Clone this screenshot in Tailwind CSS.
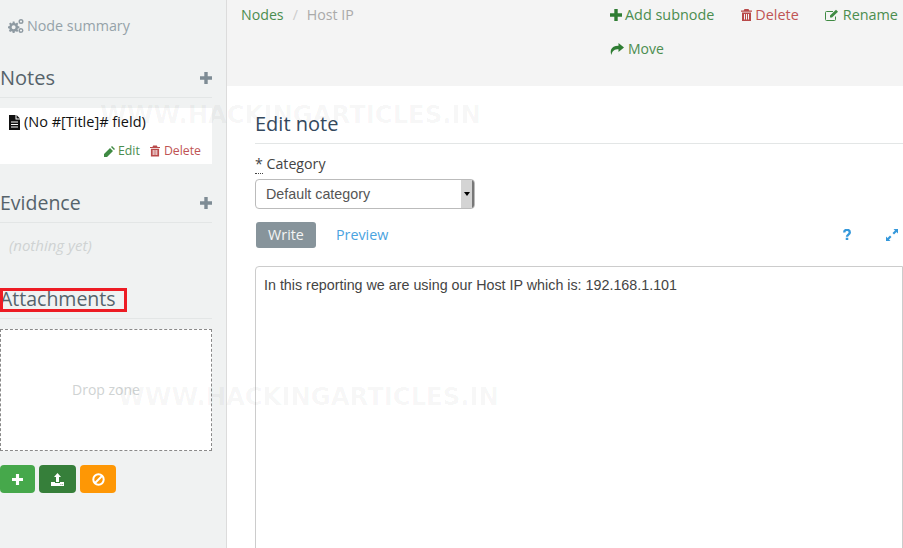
<!DOCTYPE html>
<html lang="en">
<head>
    <meta charset="UTF-8">
    <title>Edit note</title>
    <script src="https://cdn.jsdelivr.net/npm/@tailwindcss/browser@4"></script>
</head>
<body class="relative w-[903px] h-[548px] overflow-hidden bg-white font-['Open_Sans',sans-serif] text-[14px] flex">
    <!-- Sidebar -->
    <aside class="w-[227px] h-full shrink-0 bg-[#f0f2f2] border-r border-[#dcdcdc] flex flex-col">
        <div class="h-[50px] pl-[8px] pt-[1px] flex items-center gap-[3px] text-[14.3px] text-[#95a2a9]">
            <svg class="w-[16px] h-[14px]" viewBox="0 0 16 14" fill="#8e9aa2">
                <path fill-rule="evenodd" d="M4.700 2.500h1.800l.3 1.500 1 .4 1.300-.8 1.200 1.200-.8 1.300.4 1 1.500.3v1.800l-1.500.3-.4 1 .8 1.300-1.200 1.200-1.300-.8-1 .4-.3 1.500H4.700l-.3-1.500-1-.4-1.300.8L.9 11.800l.8-1.300-.4-1L0 9.200V7.400l1.500-.3.4-1-.8-1.300 1.200-1.200 1.300.8 1-.4zM5.600 6.300a2 2 0 1 0 0 4 2 2 0 0 0 0-4z"/>
                <path fill-rule="evenodd" d="M13 0a2.500 2.500 0 1 0 0 5 2.500 2.500 0 0 0 0-5zm0 1.400a1.100 1.100 0 1 1 0 2.200 1.100 1.100 0 0 1 0-2.200zM13 9a2.500 2.500 0 1 0 0 5 2.500 2.500 0 0 0 0-5zm0 1.400a1.100 1.100 0 1 1 0 2.200 1.100 1.100 0 0 1 0-2.200z"/>
            </svg>
            <span>Node summary</span>
        </div>

        <div class="w-[212px] h-[48px] flex items-end justify-between border-b border-[#e3e6e6] pb-[5px]">
            <h2 class="text-[20px] leading-[28px] text-[#56636b]">Notes</h2>
            <svg class="w-[12px] h-[12px] mb-[8px]" viewBox="0 0 12 12" fill="#7e8c95"><path d="M4.300 0h3.400v4.300H12v3.400H7.700V12H4.300V7.700H0V4.300h4.300z"/></svg>
        </div>
        <div class="mt-[10px] w-[212px] h-[56px] bg-white">
            <div class="pl-[8px] pt-[4px] flex items-center gap-[3px] text-[14.5px] leading-[20px] text-[#111]">
                <svg class="w-[13px] h-[15px]" viewBox="0 0 13 15" fill="#111"><path fill-rule="evenodd" d="M1 0h6.500v4.500H12V15H1zM8.500 0 12 3.500H8.500zM3 6.500v1h7v-1zM3 9v1h7V9zM3 11.500v1h7v-1z"/></svg>
                <span>(No #[Title]# field)</span>
            </div>
            <div class="mt-[11px] pr-[11px] flex justify-end gap-[10px] text-[12.300px] leading-[16px]">
                <span class="flex items-center gap-[3px] text-[#4b8d4f]">
                    <svg class="w-[11px] h-[11px]" viewBox="0 0 11 11" fill="#3f8a43"><path d="M0 11V8l6-6 3 3-6 6zM7 1l1-1 3 3-1 1z"/></svg>
                    Edit
                </span>
                <span class="flex items-center gap-[4px] text-[#c05454]">
                    <svg class="w-[10px] h-[12px]" viewBox="0 0 11 12" fill="#b94a4a"><path fill-rule="evenodd" d="M3.500 0h4l.8 1.500H11v1.200H0V1.500h2.700zM1 3.500h9V12H1zM3 5v5.500h1V5zM5 5v5.500h1V5zM7 5v5.500h1V5z"/></svg>
                    Delete
                </span>
            </div>
        </div>

        <div class="mt-[11px] w-[212px] h-[48px] flex items-end justify-between border-b border-[#e3e6e6] pb-[5px]">
            <h2 class="text-[19.500px] leading-[28px] text-[#56636b]">Evidence</h2>
            <svg class="w-[12px] h-[12px] mb-[8px]" viewBox="0 0 12 12" fill="#7e8c95"><path d="M4.300 0h3.400v4.300H12v3.400H7.700V12H4.300V7.700H0V4.300h4.300z"/></svg>
        </div>
        <p class="pl-[9px] mt-[12px] text-[15px] leading-[20px] italic text-[#cfd3d3]">(nothing yet)</p>

        <div class="mt-[27px] w-[212px] h-[37px] flex items-end border-b border-[#e3e6e6] pb-[5px]">
            <h2 class="text-[19.500px] leading-[28px] text-[#56636b] whitespace-nowrap">Attachments</h2>
        </div>
        <div class="mt-[10px] w-[212px] h-[122px] pb-[2px] bg-white border border-dashed border-[#8a8a8a] flex items-center justify-center text-[14px] text-[#cfd3d3]">Drop zone</div>
        <div class="mt-[14px] flex gap-[4px]">
            <button class="w-[35px] h-[28px] rounded-[4px] bg-[#46a84b] flex items-center justify-center">
                <svg class="w-[11px] h-[11px]" viewBox="0 0 12 12" fill="#fff"><path d="M4.300 0h3.400v4.300H12v3.400H7.700V12H4.300V7.700H0V4.300h4.300z"/></svg>
            </button>
            <button class="w-[37px] h-[28px] rounded-[4px] bg-[#367f3a] flex items-center justify-center">
                <svg class="w-[13px] h-[13px]" viewBox="0 0 13 13" fill="#fff"><path fill-rule="evenodd" d="M6.500 0 10 4H8v5H5V4H3zM0 9h4v1h5V9h4v4H0zM9.500 11v.8h.8V11zM11.300 11v.8h.8V11z"/></svg>
            </button>
            <button class="w-[36px] h-[28px] rounded-[4px] bg-[#fe9705] flex items-center justify-center">
                <svg class="w-[13px] h-[13px]" viewBox="0 0 13 13" fill="none" stroke="#fff" stroke-width="2"><circle cx="6.500" cy="6.500" r="5.200"/><path d="M3 10 10 3"/></svg>
            </button>
        </div>
    </aside>

    <!-- Main -->
    <main class="flex-1 min-w-0 flex flex-col">
        <header class="h-[86px] shrink-0 bg-[#f4f4f4] flex justify-between">
            <div class="pl-[14px] pt-[5px] text-[14.200px] leading-[20px] flex">
                <span class="text-[#4b8d4f]">Nodes</span>
                <span class="ml-[9px] text-[#ccc]">/</span>
                <span class="ml-[9px] text-[#aaa]">Host IP</span>
            </div>
            <div class="w-[293px] shrink-0 text-[14.400px] leading-[20px] text-[#4b8d4f]">
                <div class="pt-[5px] flex">
                    <span class="flex items-center gap-[3px]">
                        <svg class="w-[12px] h-[12px]" viewBox="0 0 12 12" fill="#2f7d33"><path d="M4.300 0h3.400v4.300H12v3.400H7.700V12H4.300V7.700H0V4.300h4.300z"/></svg>
                        Add subnode
                    </span>
                    <span class="ml-[27px] flex items-center gap-[3px] text-[#c05454]">
                        <svg class="w-[11px] h-[12px]" viewBox="0 0 11 12" fill="#b94a4a"><path fill-rule="evenodd" d="M3.500 0h4l.8 1.500H11v1.200H0V1.500h2.700zM1 3.500h9V12H1zM3 5v5.500h1V5zM5 5v5.500h1V5zM7 5v5.500h1V5z"/></svg>
                        Delete
                    </span>
                    <span class="ml-[26px] flex items-center gap-[4px]">
                        <svg class="w-[14px] h-[12px]" viewBox="0 0 14 12" fill="none" stroke="#3f8a43"><path d="M10.500 7.500v3a1 1 0 0 1-1 1h-8a1 1 0 0 1-1-1v-7a1 1 0 0 1 1-1H8"/><path d="M5 8.500V6.500L11 .8l2 2-6 5.700z" fill="#3f8a43" stroke="none"/></svg>
                        Rename
                    </span>
                </div>
                <div class="mt-[14px] flex items-center gap-[4px] text-[14px]">
                    <svg class="w-[14px] h-[12px]" viewBox="0 0 14 12" fill="#2f7d33"><path d="M8.500 0 14 4.500 8.500 9V6.300C5 6.300 2 7.500 1.500 12 0 9 0 3 8.500 2.800z"/></svg>
                    Move
                </div>
            </div>
        </header>

        <section class="flex-1 pl-[28px] min-h-0">
            <h1 class="pt-[24px] pb-[5px] text-[20px] leading-[28px] text-[#34495e] border-b border-[#e3e6e6]">Edit note</h1>
            <div class="mt-[10px] text-[14.200px] leading-[20px] text-[#444]"><span class="border-b border-dotted border-[#444]">*</span> Category</div>
            <div class="mt-[5px] w-[220px] h-[30px] flex border border-[#bbb] rounded-[4px] bg-white overflow-hidden font-['Liberation_Sans',sans-serif] text-[14.300px] text-[#555]">
                <span class="flex-1 pl-[10px] leading-[28px]">Default category</span>
                <span class="w-[13px] bg-[#d4d4d4] border-r-2 border-[#777] flex items-center justify-center">
                    <span class="border-x-[3px] border-t-[4px] border-x-transparent border-t-black"></span>
                </span>
            </div>
            <div class="mt-[13px] flex items-center text-[14.300px]">
                <span class="ml-[1px] w-[60px] h-[26px] rounded-[3px] bg-[#87949b] text-[#f4f5f5] text-center leading-[26px]">Write</span>
                <span class="ml-[20px] text-[#4aa3df]">Preview</span>
                <svg class="ml-[455px] -mt-[1px] w-[8px] h-[11px]" viewBox="0 0 9 13" fill="none" stroke="#3498db" stroke-width="2.800"><path d="M1.200 4.200c0-4.200 6.600-4.200 6.600 0 0 2.500-3.300 2.500-3.300 5"/><path d="M4.500 10.300V13" stroke-width="3"/></svg>
                <svg class="ml-[35px] -mt-[1px] w-[12px] h-[12px]" viewBox="0 0 12 12" fill="#3498db"><path d="M7.500 0H12v4.500L10.500 3 8 5.500l-1.500-1.500L9 1.500zM0 12V7.500L1.500 9 4 6.500 5.500 8 3 10.500 4.500 12z"/></svg>
            </div>
            <div class="mt-[18px] h-[300px] border border-[#ccc] rounded-tl-[4px] p-[8px] font-['Liberation_Sans',sans-serif] text-[14.300px] leading-[20px] text-[#444]">In this reporting we are using our Host IP which is: 192.168.1.101</div>
        </section>
    </main>

    <!-- Annotation and watermark drawn over the page -->
    <div class="absolute left-0 top-[288px] w-[127px] h-[24px] border-[3px] border-[#ed1c24] pointer-events-none"></div>
    <div class="absolute left-[100px] top-[101px] font-['DejaVu_Sans',sans-serif] font-bold text-[24.300px] leading-[28px] text-black/[0.04] whitespace-nowrap pointer-events-none">WWW.HACKINGARTICLES.IN</div>
    <div class="absolute left-[118px] top-[383px] font-['DejaVu_Sans',sans-serif] font-bold text-[24.300px] leading-[28px] text-black/[0.04] whitespace-nowrap pointer-events-none">WWW.HACKINGARTICLES.IN</div>
</body>
</html>
